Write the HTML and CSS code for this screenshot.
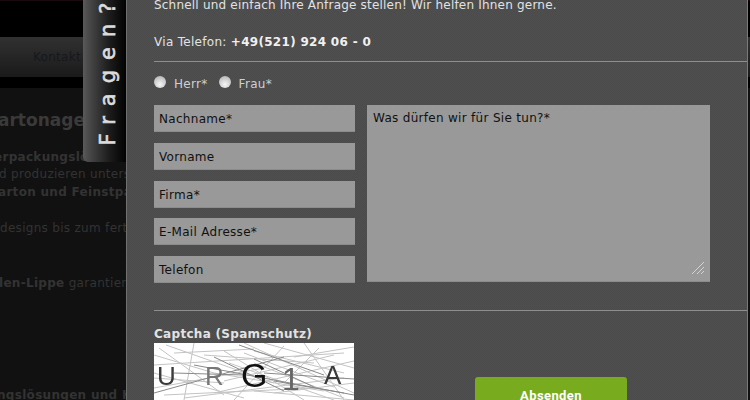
FILE: index.html
```html
<!DOCTYPE html>
<html lang="de">
<head>
<meta charset="utf-8">
<title>Kontakt</title>
<link rel="stylesheet" href="styles.css">
</head>
<body>
<div class="page">
  <div class="topbar"></div>
  <nav class="nav"><span class="nav-item">Kontakt</span></nav>
  <main class="content">
    <h1 class="title">artonage</h1>
    <p class="l1"><b>erpackungsl&ouml;</b></p>
    <p class="l2">d produzieren unters</p>
    <p class="l3"><b>arton und Feinstpa</b></p>
    <p class="l4">designs bis zum fert</p>
    <p class="l5"><b>len-Lippe</b> garantier</p>
    <p class="l6"><b>ngsl&ouml;sungen und K</b></p>
  </main>
</div>
<div class="tab"><span class="tab-text">Fragen?</span></div>
<aside class="panel">
  <p class="intro">Schnell und einfach Ihre Anfrage stellen! Wir helfen Ihnen gerne.</p>
  <p class="phone">Via Telefon: <b class="phone-no">+49(521) 924 06 - 0</b></p>
  <hr class="rule">
  <div class="radios">
    <span class="radio"></span><span class="radio-label">Herr*</span>
    <span class="radio"></span><span class="radio-label">Frau*</span>
  </div>
  <div class="fields">
    <div class="inputs">
      <div class="input">Nachname*</div>
      <div class="input">Vorname</div>
      <div class="input">Firma*</div>
      <div class="input">E-Mail Adresse*</div>
      <div class="input">Telefon</div>
    </div>
    <div class="textarea">Was d&uuml;rfen wir f&uuml;r Sie tun?*
      <svg class="grip" width="14" height="14" viewBox="0 0 14 14"><path d="M1 13 13 1M6 13 13 6M10 13 13 10" stroke="#d4d4d4" stroke-width="1" fill="none"/></svg>
    </div>
  </div>
  <hr class="rule rule-2">
  <div class="bottom">
    <div class="captcha">
      <div class="captcha-title">Captcha (Spamschutz)</div>
      <div class="captcha-img">
        <svg class="captcha-svg" width="200" height="57" viewBox="0 0 200 57">
          <g stroke="#c4c4c4" stroke-width="1" fill="none">
            <path d="M5 5 70 52M12 2 120 40M0 22 190 10M40 0 30 57M90 0 200 50M60 50 200 18M130 3 80 57M0 45 110 25M150 0 190 57M10 52 160 45M100 8 190 30M70 8 150 57M0 12 60 30M120 50 200 40M165 5 130 40M20 10 100 6M50 12 160 20M0 35 70 40M110 0 200 25M30 55 190 35M140 14 200 4M75 20 180 57M0 30 90 55M100 48 200 57M90 10 180 44M60 30 170 48M100 20 190 55M70 38 180 12"/>
          </g>
          <g stroke="#8a8a8a" stroke-width="1" fill="none">
            <path d="M40 22 200 52M0 50 130 14M85 2 170 32M60 14 130 48M20 30 90 32M120 38 190 50M100 16 160 44M110 30 200 36"/>
          </g>
          <text x="3" y="42" class="cl">U</text>
          <text x="51" y="42" class="cl cl-gray">R</text>
          <text x="87" y="44" class="cl cl-big">G</text>
          <text x="128" y="47" class="cl cl-one">1</text>
          <text x="170" y="41" class="cl">A</text>
        </svg>
      </div>
    </div>
    <button class="submit" type="button">Absenden</button>
  </div>
</aside>
</body>
</html>
```
FILE: styles.css
```css
* { box-sizing: border-box; }
html, body { margin: 0; height: 400px; overflow: hidden; }
body { background: #3c3c3c; font-family: "DejaVu Sans", Verdana, sans-serif; position: relative; width: 750px; }
p { margin: 0; }
.page { height: 400px; color: #333; font-size: 12px; letter-spacing: .3px; }
.topbar { height: 37px; background: #000; border-top: 1px solid #1a0a0e; }
.nav { height: 40px; background: linear-gradient(#313131, #1a1a1a); padding: 13px 0 0 33px; color: #15191e; }
.content { background: #111; border-top: 11px solid #000; height: 323px; overflow: hidden; position: relative; }
.title { margin: 0; position: absolute; left: -2px; top: 22px; font-size: 17px; letter-spacing: 0; color: #3a3a3a; white-space: nowrap; }
.content p { position: absolute; white-space: nowrap; }
.l1 { left: -6px; top: 62px; }
.l2 { left: -1px; top: 79px; }
.l3 { left: -2px; top: 97px; }
.l4 { left: 0; top: 133px; }
.l5 { left: -1px; top: 188px; }
.l6 { left: -3px; top: 300px; }
.tab { position: absolute; left: 83px; top: -4px; width: 44px; height: 166px; background: linear-gradient(90deg, #5a5a5a, #4a4a4a 12%, #1c1c1c 60%, #000); border-radius: 0 0 0 5px; }
.tab-text { position: absolute; left: 50%; top: 50%; transform: translate(-50%, -50%) rotate(-90deg); margin: -10px 0 0 3px; color: #dcdcdc; font: 21px "DejaVu Sans", sans-serif; -webkit-text-stroke: .6px #dcdcdc; letter-spacing: 10px; white-space: nowrap; }
.panel { position: absolute; left: 126px; top: -20px; width: 622px; height: 440px; background: #4d4d4d conic-gradient(#4b4b4b 25%, #4f4f4f 0 50%, #4b4b4b 0 75%, #4f4f4f 0) 0 0 / 2px 2px; border-left: 1px solid #707070; border-right: 1px solid #7a7a7a; padding: 18px 0 0 27px; color: #e2e2e2; font-size: 12px; letter-spacing: .3px; }
.intro { line-height: 14px; letter-spacing: .2px; }
.phone { margin-top: 23px; line-height: 14px; }
.phone-no { color: #f0f0f0; }
.rule { border: 0; height: 1px; background: #8e8e8e; margin: 12px 0 0 0; width: 593px; }
.radios { display: flex; align-items: center; margin-top: 14px; height: 16px; }
.radio { width: 12px; height: 12px; border-radius: 50%; background: radial-gradient(circle at 50% 70%, #f6f6f6, #bdbdbd 75%); margin: -5px 8px 0 0; }
.radio-label { margin-right: 11px; color: #cfcfcf; }
.fields { display: flex; gap: 12px; margin-top: 13px; }
.inputs { display: flex; flex-direction: column; gap: 10.75px; width: 201px; }
.input { height: 27px; background: #999; border-bottom: 1px solid #8c8c8c; color: #111; padding: 6px 0 0 5px; line-height: 16px; }
.textarea { position: relative; width: 343px; height: 177px; background: #999; border-bottom: 1px solid #8c8c8c; color: #111; padding: 6px 0 0 6px; line-height: 15px; }
.grip { position: absolute; right: 5px; bottom: 6px; }
.rule-2 { margin-top: 27px; }
.bottom { display: flex; margin-top: 16px; }
.captcha { width: 200px; }
.captcha-title { font-weight: 700; line-height: 15px; }
.captcha-img { height: 57px; margin-top: 1px; background: #fff; overflow: hidden; }
.captcha-svg { display: block; filter: blur(.4px); }
.cl { font: 26px "Liberation Sans", sans-serif; fill: #3a3a3a; }
.cl-gray { fill: #777; }
.cl-one { font-size: 32px; fill: #666; }
.cl-big { font-size: 34px; fill: #111; }
.submit { margin: 50px 0 0 121px; width: 152px; height: 40px; border: 0; border-radius: 3px; background: #78ac1e; color: #fff; font: 700 13px Roboto, sans-serif; letter-spacing: .4px; padding: 0 0 4px; }
```
